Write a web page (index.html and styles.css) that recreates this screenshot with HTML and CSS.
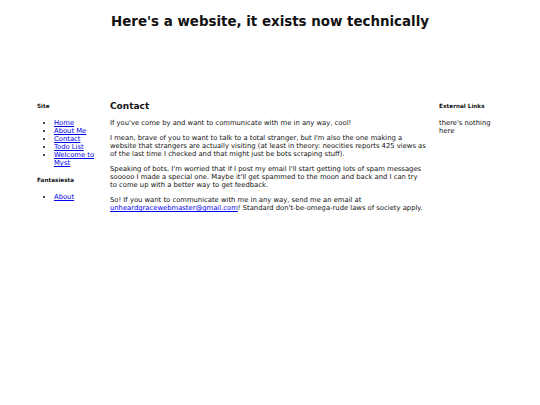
FILE: index.html
```html
<!DOCTYPE html>
<html lang="en">
<head>
<meta charset="utf-8">
<title>Contact</title>
<link rel="stylesheet" href="styles.css">
</head>
<body>
<header class="site-header">
  <h1 class="site-title">Here's a website, it exists now technically</h1>
</header>
<div class="layout">
  <nav class="sidebar">
    <h4 class="side-heading">Site</h4>
    <ul class="side-list">
      <li><a href="#">Home</a></li>
      <li><a href="#">About Me</a></li>
      <li><a href="#">Contact</a></li>
      <li><a href="#">Todo List</a></li>
      <li><a href="#">Welcome to Myst</a></li>
    </ul>
    <h4 class="side-heading">Fantasiesta</h4>
    <ul class="side-list">
      <li><a href="#">About</a></li>
    </ul>
  </nav>
  <main class="content">
    <h2 class="content-heading">Contact</h2>
    <p>If you've come by and want to communicate with me in any way, cool!</p>
    <p>I mean, brave of you to want to talk to a total stranger, but I'm also the one making a website that strangers are actually visiting (at least in theory: neocities reports 425 views as of the last time I checked and that might just be bots scraping stuff).</p>
    <p>Speaking of bots, I'm worried that if I post my email I'll start getting lots of spam messages sooooo I made a special one. Maybe it'll get spammed to the moon and back and I can try to come up with a better way to get feedback.</p>
    <p>So! If you want to communicate with me in any way, send me an email at <a href="#">unheardgracewebmaster@gmail.com</a>! Standard don't-be-omega-rude laws of society apply.</p>
  </main>
  <aside class="sidebar right">
    <h4 class="side-heading">External Links</h4>
    <p>there's nothing here</p>
  </aside>
</div>
</body>
</html>
```

FILE: styles.css
```css
html, body {
  margin: 0;
  padding: 0;
  background: #fff;
}
body {
  font-family: "DejaVu Sans", Verdana, sans-serif;
  color: #111;
  font-size: 6.8px;
  line-height: 8px;
}
.site-header {
  height: 98px;
  padding-top: 13px;
  box-sizing: border-box;
}
.site-title {
  margin: 0;
  text-align: center;
  font-size: 13.4px;
  line-height: 18px;
  font-weight: bold;
}
.layout {
  display: grid;
  grid-template-columns: 60px 316px 60px;
  column-gap: 13px;
  padding-left: 37px;
  align-items: start;
}
.layout > .right {
  margin-left: 0;
}
.side-heading {
  margin: 4px 0 0;
  font-size: 5.7px;
  line-height: 8px;
  font-weight: bold;
}
.side-list {
  margin: 9px 0 9px;
  padding-left: 17px;
}
.side-list li {
  line-height: 8px;
}
a {
  color: #0000ee;
}
.content-heading {
  margin: 2px 0 0;
  font-size: 9px;
  line-height: 12px;
  font-weight: bold;
}
.content p {
  margin: 7px 0 0;
}
.content p:first-of-type {
  margin-top: 7px;
}
.right p {
  margin: 9px 0 0;
}
```
